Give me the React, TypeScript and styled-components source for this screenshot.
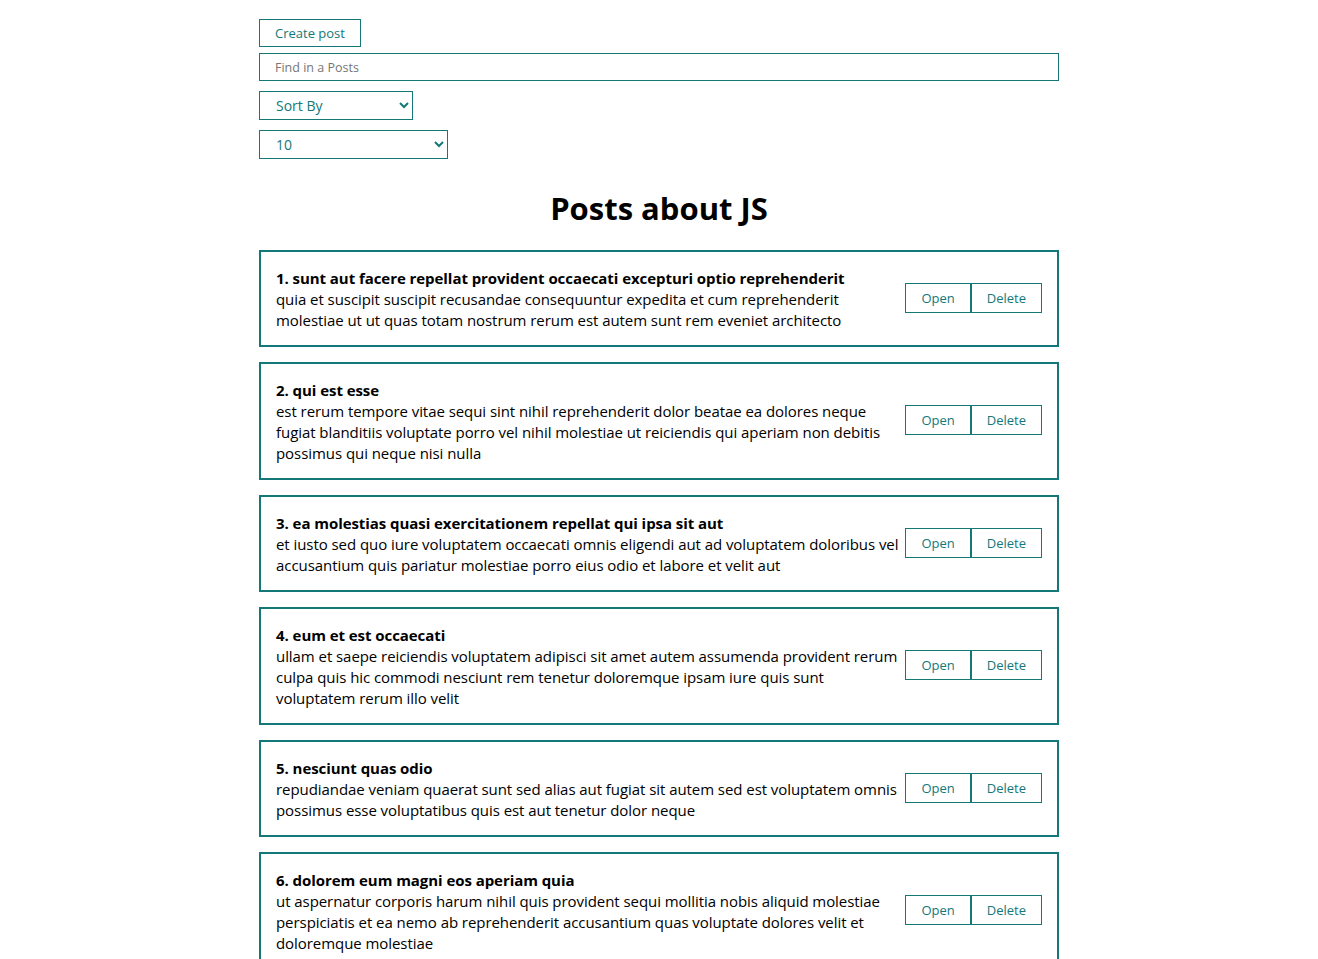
import React, { useState } from "react";
import styled, { createGlobalStyle } from "styled-components";

const teal = "#137877";

const GlobalStyle = createGlobalStyle`
  body {
    margin: 0;
    background: #fff;
    font-family: "Open Sans", "Noto Sans", "Liberation Sans", sans-serif;
    color: #000;
  }
`;

const Page = styled.div`
  width: 800px;
  margin: 0 auto;
  padding-top: 19px;
`;

const Controls = styled.div`
  display: flex;
  flex-direction: column;
  align-items: flex-start;
`;

const OutlineButton = styled.button<{ $joined?: boolean }>`
  height: ${(p) => (p.$joined ? "30px" : "28px")};
  padding: 0 15px;
  background: transparent;
  border: 1px solid ${teal};
  color: ${teal};
  font-family: inherit;
  font-size: 13px;
  cursor: pointer;
`;

const SearchInput = styled.input`
  box-sizing: border-box;
  width: 100%;
  height: 28px;
  margin-top: 6px;
  padding: 0 15px;
  border: 1px solid ${teal};
  font-family: inherit;
  font-size: 12.5px;
  outline: none;

  &::placeholder {
    color: #767676;
  }
`;

const Select = styled.select<{ $width: number }>`
  box-sizing: border-box;
  width: ${(p) => p.$width}px;
  height: 29px;
  margin-top: 10px;
  padding: 0 10px 0 12px;
  border: 1px solid ${teal};
  border-radius: 0;
  background: #fff;
  color: ${teal};
  font-family: inherit;
  font-size: 14px;
`;

const Heading = styled.h1`
  margin: 29px 0 22px;
  text-align: center;
  font-size: 31px;
  line-height: 40px;
  font-weight: 700;
`;

const Card = styled.div`
  display: flex;
  align-items: center;
  padding: 16px 15px 14px;
  margin-bottom: 15px;
  border: 2px solid ${teal};
  font-size: 15px;
  line-height: 21px;
`;

const CardText = styled.div`
  flex: 1;
  letter-spacing: -0.06px;
`;

const CardTitle = styled.div`
  font-weight: 700;
`;

const ButtonGroup = styled.div`
  display: flex;
  flex: none;
  margin-top: -4px;
`;

type Post = { id: number; title: string; body: string };

const posts: Post[] = [
  {
    id: 1,
    title: "sunt aut facere repellat provident occaecati excepturi optio reprehenderit",
    body: "quia et suscipit suscipit recusandae consequuntur expedita et cum reprehenderit molestiae ut ut quas totam nostrum rerum est autem sunt rem eveniet architecto",
  },
  {
    id: 2,
    title: "qui est esse",
    body: "est rerum tempore vitae sequi sint nihil reprehenderit dolor beatae ea dolores neque fugiat blanditiis voluptate porro vel nihil molestiae ut reiciendis qui aperiam non debitis possimus qui neque nisi nulla",
  },
  {
    id: 3,
    title: "ea molestias quasi exercitationem repellat qui ipsa sit aut",
    body: "et iusto sed quo iure voluptatem occaecati omnis eligendi aut ad voluptatem doloribus vel accusantium quis pariatur molestiae porro eius odio et labore et velit aut",
  },
  {
    id: 4,
    title: "eum et est occaecati",
    body: "ullam et saepe reiciendis voluptatem adipisci sit amet autem assumenda provident rerum culpa quis hic commodi nesciunt rem tenetur doloremque ipsam iure quis sunt voluptatem rerum illo velit",
  },
  {
    id: 5,
    title: "nesciunt quas odio",
    body: "repudiandae veniam quaerat sunt sed alias aut fugiat sit autem sed est voluptatem omnis possimus esse voluptatibus quis est aut tenetur dolor neque",
  },
  {
    id: 6,
    title: "dolorem eum magni eos aperiam quia",
    body: "ut aspernatur corporis harum nihil quis provident sequi mollitia nobis aliquid molestiae perspiciatis et ea nemo ab reprehenderit accusantium quas voluptate dolores velit et doloremque molestiae",
  },
];

function PostItem({ post }: { post: Post }) {
  return (
    <Card>
      <CardText>
        <CardTitle>
          {post.id}. {post.title}
        </CardTitle>
        <div>{post.body}</div>
      </CardText>
      <ButtonGroup>
        <OutlineButton $joined>Open</OutlineButton>
        <OutlineButton $joined>Delete</OutlineButton>
      </ButtonGroup>
    </Card>
  );
}

export default function App() {
  const [query, setQuery] = useState("");
  return (
    <Page>
      <GlobalStyle />
      <Controls>
        <OutlineButton>Create post</OutlineButton>
        <SearchInput
          placeholder="Find in a Posts"
          value={query}
          onChange={(e) => setQuery(e.target.value)}
        />
        <Select $width={154} defaultValue="">
          <option value="" disabled>
            Sort By
          </option>
          <option value="title">By name</option>
          <option value="body">By description</option>
        </Select>
        <Select $width={189} defaultValue="10">
          <option value="5">5</option>
          <option value="10">10</option>
          <option value="25">25</option>
          <option value="-1">Show all</option>
        </Select>
      </Controls>
      <Heading>Posts about JS</Heading>
      {posts.map((p) => (
        <PostItem key={p.id} post={p} />
      ))}
    </Page>
  );
}
